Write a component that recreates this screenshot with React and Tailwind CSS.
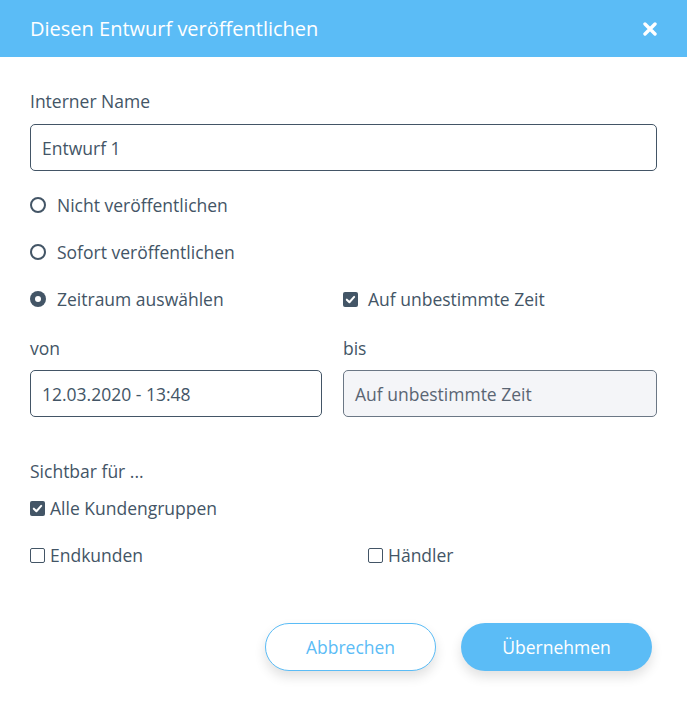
import React from "react";

const font = { fontFamily: '"Open Sans", "Noto Sans", sans-serif' };

function Radio({ checked }) {
  return checked ? (
    <span className="w-[16px] h-[16px] rounded-full bg-[#435566] flex items-center justify-center shrink-0">
      <span className="w-[6px] h-[6px] rounded-full bg-white" />
    </span>
  ) : (
    <span className="w-[16px] h-[16px] rounded-full border-2 border-[#435566] shrink-0" />
  );
}

function Check({ checked }) {
  return checked ? (
    <span className="w-[15px] h-[15px] rounded-[2px] bg-[#435566] flex items-center justify-center shrink-0">
      <svg width="11" height="11" viewBox="0 0 12 12" fill="none">
        <path d="M2 6.2 L4.8 9 L10 3.2" stroke="white" strokeWidth="2.2" strokeLinecap="round" strokeLinejoin="round" />
      </svg>
    </span>
  ) : (
    <span className="w-[15px] h-[15px] rounded-[2px] border-[1.5px] border-[#435566] shrink-0" />
  );
}

export default function App() {
  return (
    <div className="w-[687px] h-[706px] bg-white text-[#435566] text-[17.5px] leading-[24px]" style={font}>
      <div className="h-[57px] bg-[#5bbcf6] flex items-center justify-between pl-[30px] pr-[30px]">
        <span className="text-white text-[20px]">Diesen Entwurf veröffentlichen</span>
        <svg width="14" height="14" viewBox="0 0 14 14">
          <path d="M2 2 L12 12 M12 2 L2 12" stroke="white" strokeWidth="3.4" strokeLinecap="round" />
        </svg>
      </div>
      <div className="px-[30px] pt-[32px]">
        <div>Interner Name</div>
        <div className="mt-[11px] h-[47px] border border-[#435566] rounded-[5px] flex items-center px-[11px]">
          Entwurf 1
        </div>
        <div className="mt-[22px] flex items-center gap-[11px] h-[24px]">
          <Radio />
          <span>Nicht veröffentlichen</span>
        </div>
        <div className="mt-[23px] flex items-center gap-[11px] h-[24px]">
          <Radio />
          <span>Sofort veröffentlichen</span>
        </div>
        <div className="mt-[23px] grid grid-cols-[292px_1fr] gap-[21px] h-[24px]">
          <div className="flex items-center gap-[11px]">
            <Radio checked />
            <span>Zeitraum auswählen</span>
          </div>
          <div className="flex items-center gap-[10px]">
            <Check checked />
            <span>Auf unbestimmte Zeit</span>
          </div>
        </div>
        <div className="mt-[25px] grid grid-cols-[292px_1fr] gap-[21px]">
          <div>
            <div>von</div>
            <div className="mt-[10px] h-[47px] border border-[#435566] rounded-[5px] flex items-center px-[11px]">
              12.03.2020 - 13:48
            </div>
          </div>
          <div>
            <div>bis</div>
            <div className="mt-[10px] h-[47px] border border-[#6b7785] bg-[#f4f5f8] rounded-[5px] flex items-center px-[11px] text-[#5a6573]">
              Auf unbestimmte Zeit
            </div>
          </div>
        </div>
        <div className="mt-[42px]">Sichtbar für ...</div>
        <div className="mt-[13px] flex items-center gap-[5px] h-[24px]">
          <Check checked />
          <span>Alle Kundengruppen</span>
        </div>
        <div className="mt-[23px] grid grid-cols-[313px_1fr] gap-[25px] h-[24px]">
          <div className="flex items-center gap-[5px]">
            <Check />
            <span>Endkunden</span>
          </div>
          <div className="flex items-center gap-[5px]">
            <Check />
            <span>Händler</span>
          </div>
        </div>
        <div className="mt-[56px] flex justify-end gap-[25px] pr-[5px]">
          <button className="w-[171px] h-[48px] rounded-full border border-[#5bbcf6] bg-white text-[#5bbcf6] text-[17.5px] shadow-[0_6px_12px_rgba(0,0,0,0.12)]">
            Abbrechen
          </button>
          <button className="w-[191px] h-[48px] rounded-full bg-[#5bbcf6] text-white text-[17.5px] shadow-[0_6px_12px_rgba(0,0,0,0.12)]">
            Übernehmen
          </button>
        </div>
      </div>
    </div>
  );
}
